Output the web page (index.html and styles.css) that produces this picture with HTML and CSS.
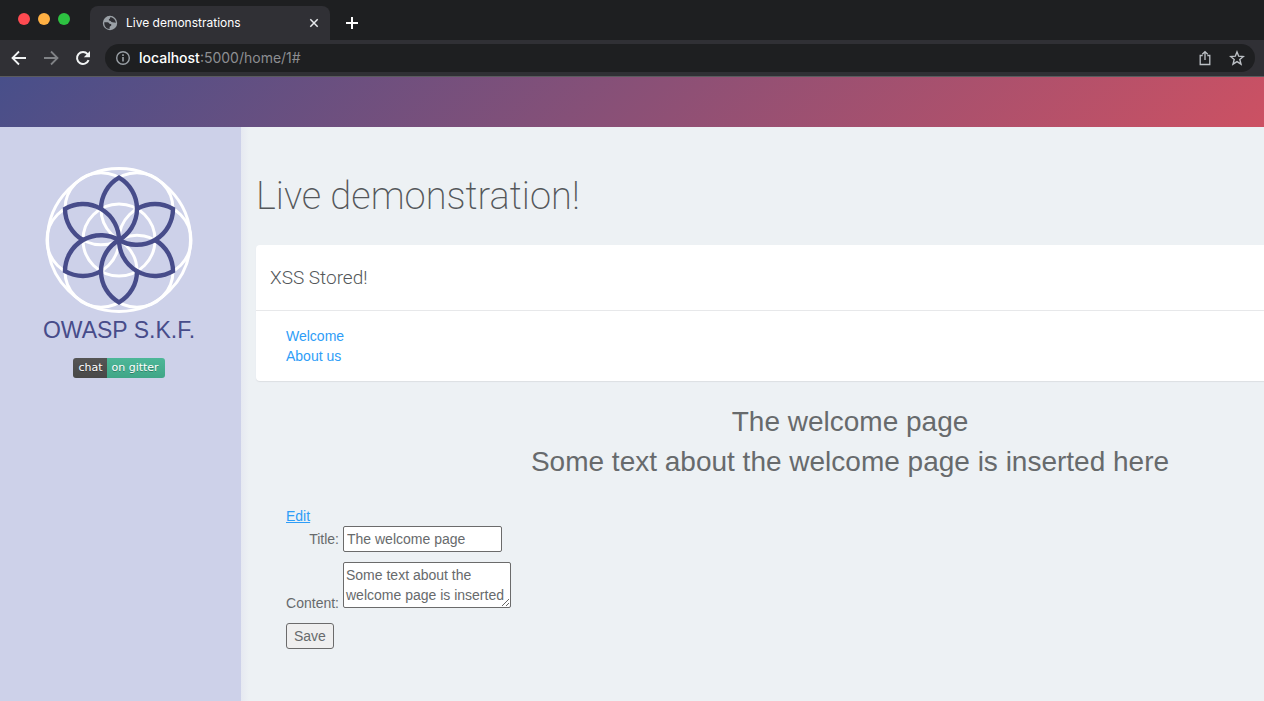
FILE: index.html
```
<!DOCTYPE html>
<html lang="en">
<head>
<meta charset="utf-8">
<title>Live demonstrations</title>
<link rel="stylesheet" href="styles.css">
</head>
<body>
<header class="browser">
  <div class="tabstrip">
    <div class="lights"><span class="light red"></span><span class="light amber"></span><span class="light green"></span></div>
    <div class="tab">
      <svg class="globe" viewBox="0 0 16 16"><circle cx="8" cy="8" r="7.2" fill="#9aa0a6"/><path d="M2.3 7.3h3.2c1.6 0 1.3 1.7 2.8 1.7 1 0 1.3.7.9 1.5-.5.9-1.6.7-1.6 1.7v1.8C4.300 14 2 11.300 2.300 7.300zM8.200 2.200c-.4 1 .1 1.300-.9 1.900-.9.5-.5 1.600.6 1.600 1.200 0 1 1.600 2.400 1.600 1.200 0 1.500.5 3.500.4C13.700 4.700 11.300 2.200 8.200 2.200z" fill="#303035"/></svg>
      <span class="tab-title">Live demonstrations</span>
      <button class="icon-btn close" aria-label="Close tab"><svg width="10" height="10" viewBox="0 0 10 10"><path d="M1.300 1.300l7.400 7.400M8.700 1.300L1.300 8.700" stroke="#e8eaed" stroke-width="1.500"/></svg></button>
    </div>
    <button class="icon-btn" aria-label="New tab"><svg width="14" height="14" viewBox="0 0 14 14"><path d="M7 1v12M1 7h12" stroke="#fff" stroke-width="2"/></svg></button>
  </div>
  <div class="toolbar">
    <button class="icon-btn" aria-label="Back"><svg width="16" height="16" viewBox="0 0 16 16"><path d="M15 8H2M8 1.500L1.500 8 8 14.500" fill="none" stroke="#f1f3f4" stroke-width="1.800"/></svg></button>
    <button class="icon-btn" aria-label="Forward"><svg width="16" height="16" viewBox="0 0 16 16"><path d="M1 8h13M8 1.500L14.500 8 8 14.500" fill="none" stroke="#808286" stroke-width="1.800"/></svg></button>
    <button class="icon-btn" aria-label="Reload"><svg width="16" height="16" viewBox="0 0 16 16"><path d="M13.600 10.200A6 6 0 1 1 12.600 4.100L14 5.600" fill="none" stroke="#f1f3f4" stroke-width="2"/><path d="M15 1v6.200H8.800z" fill="#f1f3f4"/></svg></button>
    <div class="address">
      <svg width="16" height="16" viewBox="0 0 16 16"><circle cx="8" cy="8" r="6.300" fill="none" stroke="#9aa0a6" stroke-width="1.400"/><path d="M8 7v4.500M8 4.300v1.600" stroke="#9aa0a6" stroke-width="1.600"/></svg>
      <span class="url"><b>localhost</b>:5000/home/1#</span>
      <button class="icon-btn" aria-label="Share"><svg width="16" height="16" viewBox="0 0 16 16"><path d="M5.700 5.500H3.200v9h9.600v-9h-2.500M8 10V2.500M5.300 4.300L8 1.600l2.700 2.700" fill="none" stroke="#bdc1c6" stroke-width="1.300"/></svg></button>
      <button class="icon-btn" aria-label="Bookmark"><svg width="16" height="16" viewBox="0 0 16 16"><path d="M8 1.900l1.700 4.300 4.700.3-3.600 3 1.200 4.600L8 11.600l-4 2.500 1.200-4.600-3.600-3 4.700-.3z" fill="none" stroke="#bdc1c6" stroke-width="1.400"/></svg></button>
    </div>
  </div>
</header>
<div class="banner"></div>
<div class="page">
  <aside class="sidebar">
    <svg class="logo" viewBox="-74 -74 148 148" fill="none" role="img" aria-label="OWASP S.K.F. logo">
      <defs><path id="petal" d="M0 -62.350A36 36 0 0 1 0 0M-18 -31.180A36 36 0 0 1 0 -62.350A36 36 0 0 1 18 -31.180"/></defs>
      <g stroke="#fff" stroke-width="3">
        <circle r="71.500"/><circle r="36"/>
        <circle cx="36" r="36"/><circle cx="-36" r="36"/>
        <circle cx="18" cy="-31.180" r="36"/><circle cx="-18" cy="-31.180" r="36"/>
        <circle cx="18" cy="31.180" r="36"/><circle cx="-18" cy="31.180" r="36"/>
      </g>
      <g stroke="#474c8a" stroke-width="4.400" stroke-linejoin="miter">
        <use href="#petal"/><use href="#petal" transform="rotate(60)"/><use href="#petal" transform="rotate(120)"/>
        <use href="#petal" transform="rotate(180)"/><use href="#petal" transform="rotate(240)"/><use href="#petal" transform="rotate(300)"/>
      </g>
    </svg>
    <div class="brand">OWASP S.K.F.</div>
    <a class="gitter" href="#"><span class="chat">chat</span><span class="on">on gitter</span></a>
  </aside>
  <main class="content">
    <h1>Live demonstration!</h1>
    <section class="card">
      <h2>XSS Stored!</h2>
      <nav class="links"><a href="#">Welcome</a><a href="#">About us</a></nav>
    </section>
    <div class="welcome"><p>The welcome page</p><p>Some text about the welcome page is inserted here</p></div>
    <form class="edit">
      <a class="edit-link" href="#">Edit</a>
      <div class="row"><label for="title">Title:</label><input id="title" type="text" value="The welcome page"></div>
      <div class="row content-row"><label for="body">Content:</label><textarea id="body" rows="2">Some text about the welcome page is inserted here</textarea></div>
      <button class="save" type="button">Save</button>
    </form>
  </main>
</div>
</body>
</html>
```
FILE: styles.css
```
* { box-sizing: border-box; }
body {
  margin: 0;
  min-height: 100vh;
  display: flex;
  flex-direction: column;
  overflow-x: hidden;
  background: #edf1f4;
  color: #676a6c;
  font: 14px/20px "Liberation Sans", Arial, sans-serif;
}
a { color: #2e9df7; text-decoration: none; }
svg { display: block; flex: none; }
.icon-btn { padding: 0; border: 0; background: none; }

.browser { font-family: Inter, sans-serif; border-bottom: 1px solid #5a5b5e; }
.tabstrip { display: flex; align-items: center; height: 40px; padding-left: 18px; background: #1e1f21; }
.lights { display: flex; gap: 8px; margin: 0 20px 2px 0; }
.light { width: 12px; height: 12px; border-radius: 50%; }
.red { background: #fe4a51; }
.amber { background: #ffb043; }
.green { background: #2dc141; }
.tab {
  display: flex;
  align-items: center;
  align-self: flex-end;
  width: 240px;
  height: 34px;
  padding: 0 11px 0 12px;
  margin-right: 15px;
  border-radius: 8px 8px 0 0;
  background: #303035;
  color: #fff;
  font-size: 12px;
}
.globe { width: 16px; height: 16px; margin-right: 8px; }
.tab-title { flex: 1; }
.tabstrip > .icon-btn { margin-top: 6px; }
.toolbar { display: flex; align-items: center; gap: 16px; height: 36px; padding: 0 9px 0 11px; background: #303035; }
.address {
  flex: 1;
  display: flex;
  align-items: center;
  gap: 16px;
  height: 28px;
  margin-left: -2px;
  padding: 0 10px;
  border-radius: 14px;
  background: #1e1f21;
}
.url { flex: 1; margin-left: -8px; color: #8d8e91; font-size: 14px; }
.url b { color: #fff; font-weight: 500; }

.banner { height: 50px; background: linear-gradient(135deg, #484f8a 0%, #cc5163 100%); }
.page { flex: 1; display: flex; }
.sidebar {
  flex: none;
  display: flex;
  flex-direction: column;
  align-items: center;
  width: 241px;
  padding: 39px 3px 0 0;
  background: #cdd1e9;
}
.logo { width: 148px; height: 148px; }
.brand { margin-top: 2px; color: #474c8a; font-size: 23px; line-height: 28px; }
.gitter {
  display: flex;
  margin-top: 14px;
  overflow: hidden;
  border-radius: 3px;
  color: #fff;
  font: 11px/20px "DejaVu Sans", sans-serif;
  text-shadow: 0 1px 0 rgba(0, 0, 0, .3);
}
.chat { padding: 0 5px; background: linear-gradient(#555, #484848); }
.on { padding: 0 6px 0 4px; background: linear-gradient(#4db798, #40a687); }

/* The content column runs past the right edge of the window. */
.content {
  flex: 1;
  margin-right: -180px;
  padding: 43px 0 0 15px;
  background: linear-gradient(90deg, #e6e9f1, #edf1f4 8px);
}
h1, h2, p { margin: 0; }
h1 { color: #54575a; font: 200 38px/52px Roboto, sans-serif; }
.card { margin-top: 23px; border-radius: 4px; background: #fff; box-shadow: 0 1px 1px #dcdfe3; }
h2 { padding: 20px 14px; border-bottom: 1px solid #e7e8ea; color: #54575a; font: 300 19px/25px Roboto, sans-serif; }
.links { display: flex; flex-direction: column; align-items: flex-start; padding: 15px 30px; }
.welcome { padding: 21px 30px 0; font-size: 28px; line-height: 40px; text-align: center; }
.edit { padding: 24px 30px 0; }
.edit-link { display: block; width: max-content; text-decoration: underline; }
.row { display: flex; align-items: center; gap: 4px; }
.row label { width: 53px; text-align: right; }
.content-row { align-items: flex-end; margin: 10px 0 15px; }
.content-row label { line-height: 10px; }
input, textarea {
  border: 1px solid #6b6b6b;
  border-radius: 2px;
  background: #fff;
  color: #676a6c;
  font: inherit;
}
input { width: 159px; height: 26px; padding: 1px 3px; }
textarea { width: 168px; height: 46px; padding: 2px; overflow: hidden; }
.save {
  height: 26px;
  padding: 0 7px;
  border: 1px solid #6b6b6b;
  border-radius: 3px;
  background: #efefef;
  color: #676a6c;
  font: inherit;
}
```
